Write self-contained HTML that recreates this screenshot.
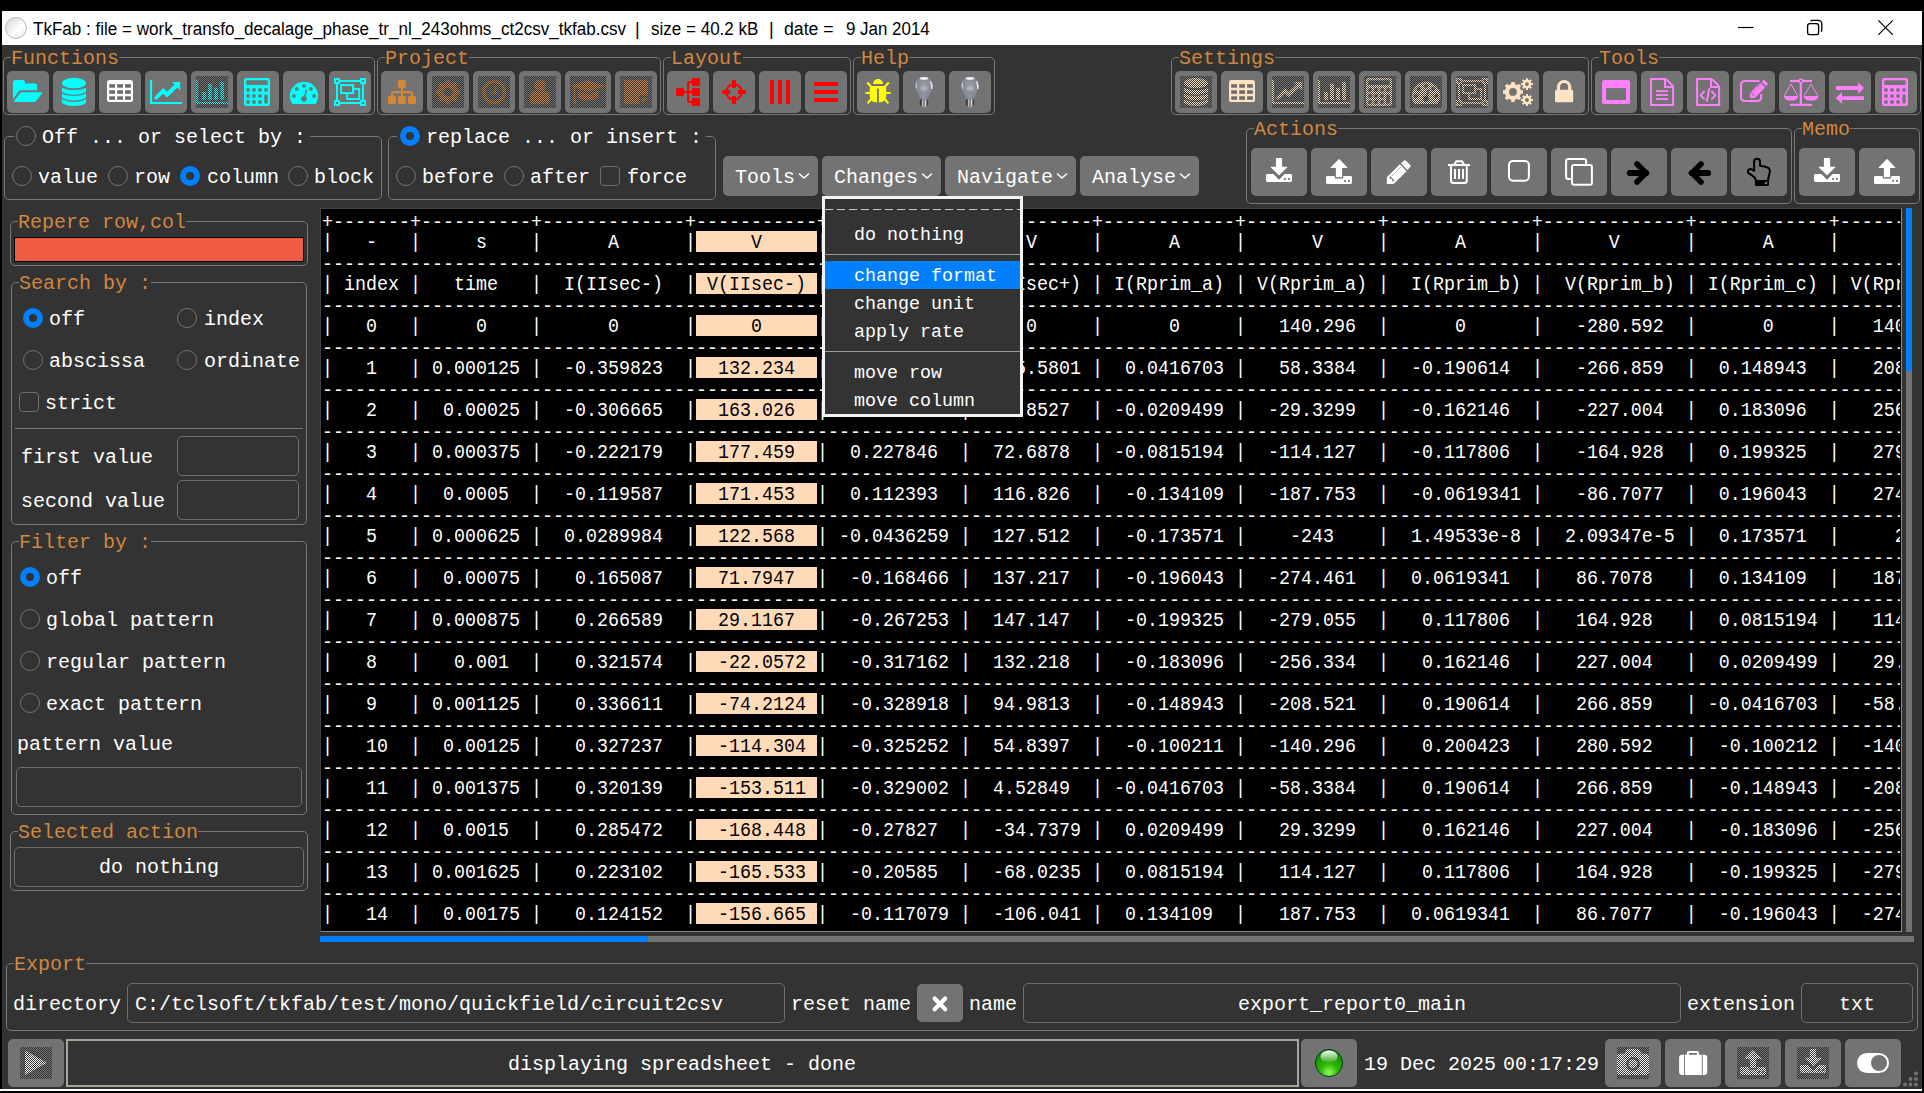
<!DOCTYPE html>
<html><head><meta charset="utf-8"><title>TkFab</title>
<style>
html,body{margin:0;padding:0;background:#000;width:1924px;height:1093px;overflow:hidden}
body{position:relative;font-family:"Liberation Mono",monospace}
.t{position:absolute;white-space:pre;font-family:"Liberation Mono",monospace}
.fr{position:absolute;border:1px solid #787878;border-radius:5px}
.lb{position:absolute;background:#333;color:#d0873f;font-size:20px;line-height:24px;height:22px;white-space:pre;box-sizing:border-box}
.cov{position:absolute;background:#333}
.bt{position:absolute;background:#737373;border-radius:5px}
.ic{position:absolute}
.st{position:absolute;background-image:repeating-conic-gradient(#333 0 25%,transparent 0 50%);background-size:2px 2px}
.ru{position:absolute;width:18px;height:18px;border:1px solid #747474;border-radius:50%}
.rs{position:absolute;width:8px;height:8px;border:6px solid #0080ff;border-radius:50%;background:#333}
.ck{position:absolute;width:18px;height:18px;border:1px solid #6e6e6e;border-radius:4px}
.en{position:absolute;border:1px solid #6e6e6e;border-radius:5px}
.tt{position:absolute;top:12px;height:34px;line-height:34px;font-family:"Liberation Sans",sans-serif;font-size:18px;color:#000;white-space:pre}
.tt span{display:inline-block;transform-origin:0 50%}
.tl{margin:0;position:absolute;left:1px;height:19.266px;font-family:"Liberation Mono",monospace;font-size:18.33px;line-height:19.266px;letter-spacing:0;color:#fff;transform:scaleY(1.09);transform-origin:0 0}
.tl b{font-weight:normal;color:#000}
.m{position:absolute;white-space:pre;font-family:"Liberation Mono",monospace;font-size:18.33px;line-height:28px;letter-spacing:0;color:#fff}
</style></head>
<body>
<div style="position:absolute;left:2px;top:11px;width:1920px;height:34px;background:#fff"></div>
<div style="position:absolute;left:2px;top:45px;width:1920px;height:1044px;background:#333"></div>
<div style="position:absolute;left:0px;top:1089px;width:1922px;height:2px;background:#fff"></div>
<div style="position:absolute;left:5px;top:17px;width:20px;height:20px;border-radius:50%;border:1px solid #b8b8b8;background:linear-gradient(135deg,#dcdcdc 10%,#ffffff 60%,#e8e8e8 100%)"></div>
<div class="tt" style="left:33px"><span style="transform:scaleX(0.9475)">TkFab : file = work_transfo_decalage_phase_tr_nl_243ohms_ct2csv_tkfab.csv</span></div>
<div class="tt" style="left:635px"><span style="transform:scaleX(1)">|</span></div>
<div class="tt" style="left:651px"><span style="transform:scaleX(0.9456)">size = 40.2 kB</span></div>
<div class="tt" style="left:769px"><span style="transform:scaleX(1)">|</span></div>
<div class="tt" style="left:784px"><span style="transform:scaleX(0.983)">date =</span></div>
<div class="tt" style="left:846px"><span style="transform:scaleX(0.9396)">9 Jan 2014</span></div>
<svg style="position:absolute;left:1730px;top:11px" width="190" height="34" viewBox="0 0 190 34" fill="none" stroke="#000" stroke-width="1.3"><path d="M8 16.5H23.5" stroke-width="1.2"/><rect x="77.6" y="12.6" width="11" height="11" rx="2.2"/><path d="M80.6 10.2 A1.6 1.6 0 0 1 82.2 9.4 H88.4 A3.4 3.4 0 0 1 91.8 12.8 V19 A1.6 1.6 0 0 1 91 20.6"/><path d="M148.3 9.3 L162.8 23.8 M162.8 9.3 L148.3 23.8" stroke-width="1.2"/></svg>
<div class="fr" style="left:3px;top:57px;width:370px;height:56px"></div>
<div class="lb" style="left:11px;top:47px;width:108px">Functions</div>
<div class="bt" style="left:7px;top:71px;width:42px;height:42px"><svg class="ic" style="left:5px;top:5px;color:#00ffff" width="32" height="32" viewBox="0 0 32 32" fill="currentColor" stroke="none"><path d="M0.9 6.6 Q0.9 3.9 3.6 3.9 H10.4 Q13.1 3.9 13.1 6.6 V7.6 H22.6 Q25.2 7.6 25.2 10.2 V14.2 H9.6 Q7.8 14.2 6.7 15.6 L0.9 23.6Z"/><path d="M10 16.2 H29.4 Q31 16.2 30 17.5 L24 25.1 Q23.2 26.1 21.8 26.1 H2.8 Q1.2 26.1 2.2 24.8 L8 17.2 Q8.8 16.2 10 16.2Z"/></svg></div>
<div class="bt" style="left:53px;top:71px;width:42px;height:42px"><svg class="ic" style="left:5px;top:5px;color:#00ffff" width="32" height="32" viewBox="0 0 32 32" fill="currentColor" stroke="none"><ellipse cx="16" cy="7.1" rx="12.1" ry="5.25"/><path d="M3.9 11.4 C8.9 14.866666666666667 23.1 14.866666666666667 28.1 11.4 V15.7 C23.1 19.766666666666666 8.9 19.766666666666666 3.9 15.7Z"/><path d="M3.9 17.15 C8.9 20.616666666666667 23.1 20.616666666666667 28.1 17.15 V21.45 C23.1 25.516666666666666 8.9 25.516666666666666 3.9 21.45Z"/><path d="M3.9 22.9 C8.9 26.633333333333333 23.1 26.633333333333333 28.1 22.9 V26.8 C23.1 31.133333333333336 8.9 31.133333333333336 3.9 26.8Z"/></svg></div>
<div class="bt" style="left:99px;top:71px;width:42px;height:42px"><svg class="ic" style="left:5px;top:5px;color:#ffffff" width="32" height="32" viewBox="0 0 32 32" fill="currentColor" stroke="none"><rect x="3" y="3.9" width="26" height="22.2" rx="2.6"/><rect x="5.2" y="8.2" width="5.8" height="3.5" fill="#6c6c6c"/><rect x="13.2" y="8.2" width="5.8" height="3.5" fill="#6c6c6c"/><rect x="21.1" y="8.2" width="5.8" height="3.5" fill="#6c6c6c"/><rect x="5.2" y="14.3" width="5.8" height="3.5" fill="#6c6c6c"/><rect x="13.2" y="14.3" width="5.8" height="3.5" fill="#6c6c6c"/><rect x="21.1" y="14.3" width="5.8" height="3.5" fill="#6c6c6c"/><rect x="5.2" y="20.3" width="5.8" height="3.5" fill="#6c6c6c"/><rect x="13.2" y="20.3" width="5.8" height="3.5" fill="#6c6c6c"/><rect x="21.1" y="20.3" width="5.8" height="3.5" fill="#6c6c6c"/></svg></div>
<div class="bt" style="left:145px;top:71px;width:42px;height:42px"><svg class="ic" style="left:5px;top:5px;color:#00ffff" width="32" height="32" viewBox="0 0 32 32" fill="currentColor" stroke="none"><path d="M0 3.9 H2.1 V26 H32.2 V28.1 H0Z"/><path d="M6.3 24.3 L3.7 21.7 L13.2 12 L17 15.8 L24.5 8.6 L22 6.05 H30.2 V14.2 L27.4 11.4 L17 21.4 L13.2 17.6Z"/></svg></div>
<div class="bt" style="left:191px;top:71px;width:42px;height:42px"><svg class="ic" style="left:5px;top:5px;color:#00ffff" width="32" height="32" viewBox="0 0 32 32" fill="currentColor" stroke="none"><path d="M0 3.9 H2 V26 H32 V28 H0Z"/><rect x="6.1" y="16" width="3.9" height="8"/><rect x="12" y="7.7" width="4" height="16.3"/><rect x="18.1" y="11.8" width="3.9" height="12.2"/><rect x="24.1" y="5.9" width="3.9" height="18.1"/></svg><div class="st" style="left:5px;top:5px;width:32px;height:32px"></div></div>
<div class="bt" style="left:237px;top:71px;width:42px;height:42px"><svg class="ic" style="left:5px;top:5px;color:#00ffff" width="32" height="32" viewBox="0 0 32 32" fill="currentColor" stroke="none"><rect x="2" y="2" width="26" height="28" rx="2.2"/><rect x="4.3" y="4.3" width="21.4" height="4.8" rx="0.6" fill="#737373"/><circle cx="6" cy="13.9" r="1.9" fill="#737373"/><circle cx="12" cy="13.9" r="1.9" fill="#737373"/><circle cx="18" cy="13.9" r="1.9" fill="#737373"/><circle cx="6" cy="20" r="1.9" fill="#737373"/><circle cx="12" cy="20" r="1.9" fill="#737373"/><circle cx="18" cy="20" r="1.9" fill="#737373"/><circle cx="6" cy="26" r="1.9" fill="#737373"/><circle cx="12" cy="26" r="1.9" fill="#737373"/><circle cx="18" cy="26" r="1.9" fill="#737373"/><circle cx="24" cy="13.9" r="1.9" fill="#737373"/><rect x="22.3" y="18.2" width="3.4" height="9.6" rx="1.7" fill="#737373"/></svg></div>
<div class="bt" style="left:283px;top:71px;width:42px;height:42px"><svg class="ic" style="left:5px;top:5px;color:#00ffff" width="32" height="32" viewBox="0 0 32 32" fill="currentColor" stroke="none"><path d="M4.3 28.1 A14.2 14.2 0 1 1 27.7 28.1Z"/><circle cx="5.96" cy="20" r="1.9" fill="#737373"/><circle cx="8.8" cy="12.9" r="1.9" fill="#737373"/><circle cx="16" cy="9.9" r="1.9" fill="#737373"/><circle cx="23" cy="12.9" r="1.9" fill="#737373"/><circle cx="26.1" cy="20" r="1.9" fill="#737373"/><circle cx="16" cy="22.8" r="2.9" fill="#737373"/><path d="M15.4 22.4 L17.7 13.6 L19.2 14 L16.9 22.8Z" fill="#737373"/></svg></div>
<div class="bt" style="left:329px;top:71px;width:42px;height:42px"><svg class="ic" style="left:5px;top:5px;color:#00ffff" width="32" height="32" viewBox="0 0 32 32" fill="currentColor" stroke="none"><path d="M0 2 H6 V4 H26 V2 H32 V8 H30 V24 H32 V30 H26 V28 H6 V30 H0 V24 H2 V8 H0Z M4 8 V24 H6 V26 H26 V24 H28 V8 H26 V6 H6 V8Z" fill-rule="evenodd"/><rect x="2" y="4" width="2" height="2" fill="#737373"/><rect x="28" y="4" width="2" height="2" fill="#737373"/><rect x="2" y="26" width="2" height="2" fill="#737373"/><rect x="28" y="26" width="2" height="2" fill="#737373"/><path d="M12.2 12 H26.2 V23.9 H12.2Z M14.2 14 V22 H24.2 V14Z" fill-rule="evenodd"/><rect x="6.1" y="8.1" width="14" height="10"/><rect x="8.1" y="10.1" width="9.9" height="6" fill="#737373"/></svg></div>
<div class="fr" style="left:377px;top:57px;width:282px;height:56px"></div>
<div class="lb" style="left:385px;top:47px;width:84px">Project</div>
<div class="bt" style="left:381px;top:71px;width:42px;height:42px"><svg class="ic" style="left:5px;top:5px;color:#d38839" width="32" height="32" viewBox="0 0 32 32" fill="currentColor" stroke="none"><rect x="12" y="4" width="8" height="8" rx="1.4"/><rect x="2" y="20" width="8" height="8" rx="1.4"/><rect x="12" y="20" width="8" height="8" rx="1.4"/><rect x="22" y="20" width="8" height="8" rx="1.4"/><path d="M16 11 V21 M6 21 V17.6 Q6 16.1 7.5 16.1 H24.5 Q26 16.1 26 17.6 V21" fill="none" stroke="currentColor" stroke-width="2.1"/></svg></div>
<div class="bt" style="left:427px;top:71px;width:42px;height:42px"><svg class="ic" style="left:5px;top:5px;color:#d38839" width="32" height="32" viewBox="0 0 32 32" fill="currentColor" stroke="none"><path d="M25.35 13.84 L28.00 13.81 L28.00 18.19 L25.35 18.16 L24.14 21.09 L26.04 22.94 L22.94 26.04 L21.09 24.14 L18.16 25.35 L18.19 28.00 L13.81 28.00 L13.84 25.35 L10.91 24.14 L9.06 26.04 L5.96 22.94 L7.86 21.09 L6.65 18.16 L4.00 18.19 L4.00 13.81 L6.65 13.84 L7.86 10.91 L5.96 9.06 L9.06 5.96 L10.91 7.86 L13.84 6.65 L13.81 4.00 L18.19 4.00 L18.16 6.65 L21.09 7.86 L22.94 5.96 L26.04 9.06 L24.14 10.91Z"/><circle cx="16" cy="16" r="9.6"/><circle cx="16" cy="16" r="4.1" fill="#737373"/></svg><div class="st" style="left:5px;top:5px;width:32px;height:32px"></div></div>
<div class="bt" style="left:473px;top:71px;width:42px;height:42px"><svg class="ic" style="left:5px;top:5px;color:#d38839" width="32" height="32" viewBox="0 0 32 32" fill="currentColor" stroke="none"><circle cx="16" cy="16" r="12"/><circle cx="16" cy="16" r="8.9" fill="#737373"/><path d="M16.2 10 H18.2 V17.8 H12.2 V15.8 H16.2Z"/></svg><div class="st" style="left:5px;top:5px;width:32px;height:32px"></div></div>
<div class="bt" style="left:519px;top:71px;width:42px;height:42px"><svg class="ic" style="left:5px;top:5px;color:#d38839" width="32" height="32" viewBox="0 0 32 32" fill="currentColor" stroke="none"><circle cx="16" cy="9.6" r="6"/><path d="M5.9 24.5 V22 Q5.9 14.8 11.6 14.8 Q16 18.4 20.4 14.8 Q26 14.8 26 22 V24.5 Q26 28 22.5 28 H9.4 Q5.9 28 5.9 24.5Z"/></svg><div class="st" style="left:5px;top:5px;width:32px;height:32px"></div></div>
<div class="bt" style="left:565px;top:71px;width:46px;height:42px"><svg class="ic" style="left:5px;top:5px;color:#d38839" width="36" height="32" viewBox="0 0 36 32" fill="currentColor" stroke="none"><path d="M0.2 10 L18 3.9 L36 10 L18 16.6Z"/><path d="M8 14.5 L18 18.4 L28.2 14.5 V20 Q28.2 24 18 24 Q8 24 8 20Z"/><path d="M3.4 11.5 L5.2 12.2 V20 L6.6 28 H3.6 L3.4 20Z"/></svg><div class="st" style="left:5px;top:5px;width:36px;height:32px"></div></div>
<div class="bt" style="left:615px;top:71px;width:42px;height:42px"><svg class="ic" style="left:5px;top:5px;color:#d38839" width="32" height="32" viewBox="0 0 32 32" fill="currentColor" stroke="none"><path d="M4 3.9 H28 V19.5 H21.5 Q19.5 19.5 19.5 21.5 V28 H4Z"/><path d="M21.7 28 V22.5 Q21.7 21.7 22.5 21.7 H28Z"/></svg><div class="st" style="left:5px;top:5px;width:32px;height:32px"></div></div>
<div class="fr" style="left:663px;top:57px;width:186px;height:56px"></div>
<div class="lb" style="left:671px;top:47px;width:72px">Layout</div>
<div class="bt" style="left:667px;top:71px;width:42px;height:42px"><svg class="ic" style="left:5px;top:5px;color:#ff0000" width="32" height="32" viewBox="0 0 32 32" fill="currentColor" stroke="none"><g transform="rotate(-90 16 16)"><rect x="12" y="4" width="8" height="8" rx="1.4"/><rect x="2" y="20" width="8" height="8" rx="1.4"/><rect x="12" y="20" width="8" height="8" rx="1.4"/><rect x="22" y="20" width="8" height="8" rx="1.4"/><path d="M16 11 V21 M6 21 V17.6 Q6 16.1 7.5 16.1 H24.5 Q26 16.1 26 17.6 V21" fill="none" stroke="currentColor" stroke-width="2.1"/></g></svg></div>
<div class="bt" style="left:713px;top:71px;width:42px;height:42px"><svg class="ic" style="left:5px;top:5px;color:#ff0000" width="32" height="32" viewBox="0 0 32 32" fill="currentColor" stroke="none"><circle cx="16" cy="16" r="7.7" fill="none" stroke="currentColor" stroke-width="2.1"/><rect x="14" y="4.1" width="4" height="7.8"/><rect x="14" y="20.1" width="4" height="7.8"/><rect x="4.1" y="14" width="7.9" height="4"/><rect x="20.1" y="14" width="7.9" height="4"/></svg></div>
<div class="bt" style="left:759px;top:71px;width:42px;height:42px"><svg class="ic" style="left:5px;top:5px;color:#ff0000" width="32" height="32" viewBox="0 0 32 32" fill="currentColor" stroke="none"><rect x="6" y="4" width="4" height="24" rx="0.5"/><rect x="14" y="4" width="4" height="24" rx="0.5"/><rect x="22" y="4" width="4" height="24" rx="0.5"/></svg></div>
<div class="bt" style="left:805px;top:71px;width:42px;height:42px"><svg class="ic" style="left:5px;top:5px;color:#ff0000" width="32" height="32" viewBox="0 0 32 32" fill="currentColor" stroke="none"><rect x="4" y="6" width="24" height="4" rx="0.5"/><rect x="4" y="14" width="24" height="4" rx="0.5"/><rect x="4" y="22" width="24" height="4" rx="0.5"/></svg></div>
<div class="fr" style="left:853px;top:57px;width:140px;height:56px"></div>
<div class="lb" style="left:861px;top:47px;width:48px">Help</div>
<div class="bt" style="left:857px;top:71px;width:42px;height:42px"><svg class="ic" style="left:5px;top:5px;color:#ffff00" width="32" height="32" viewBox="0 0 32 32" fill="currentColor" stroke="none"><path d="M11 8.1 A5 5 0 0 1 21 8.1Z"/><path d="M10.2 9.9 H21.8 Q24.2 9.9 24.2 12.5 V19 Q24.2 26.4 16.9 26.4 V12.4 H15 V26.4 Q7.7 26.4 7.7 19 V12.5 Q7.7 9.9 10.2 9.9Z"/><path d="M5.2 6.6 L9.6 11.2 M26.8 6.6 L22.4 11.2 M3.4 17 H8 M24 17 H28.6 M9.6 22.6 L5.6 27.4 M22.4 22.6 L26.4 27.4" stroke="currentColor" stroke-width="2.1" fill="none"/></svg></div>
<div class="bt" style="left:903px;top:71px;width:42px;height:42px"><svg class="ic" style="left:5px;top:5px;color:#9aa" width="32" height="32" viewBox="0 0 32 32" fill="currentColor" stroke="none"><defs><radialGradient id="bg1" cx="0.5" cy="0.45" r="0.6"><stop offset="0" stop-color="#a0a4ab"/><stop offset="0.5" stop-color="#8b8e95"/><stop offset="0.85" stop-color="#858991"/><stop offset="1" stop-color="#7a8292"/></radialGradient><linearGradient id="bg2" x1="0" x2="1"><stop offset="0" stop-color="#2c2c2c"/><stop offset="0.22" stop-color="#555"/><stop offset="0.36" stop-color="#e8e8e8"/><stop offset="0.5" stop-color="#4a4a4a"/><stop offset="0.68" stop-color="#e0e0e0"/><stop offset="0.85" stop-color="#555"/><stop offset="1" stop-color="#2a2a2a"/></linearGradient></defs><path d="M16 0.3 C9.6 0.3 6.6 5 6.6 9.6 C6.6 14.4 10.6 17.4 11.6 23.4 H20.4 C21.4 17.4 25.4 14.4 25.4 9.6 C25.4 5 22.4 0.3 16 0.3Z" fill="url(#bg1)" stroke="#5e6b86" stroke-width="0.7" stroke-opacity="0.85"/><ellipse cx="16" cy="2.5" rx="4.2" ry="1.4" fill="#fff" opacity="0.85"/><path d="M22.6 5.6 Q25 9 23.9 13 Q23.2 9 22.6 5.6Z" fill="#fff" stroke="#fff" stroke-width="0.9" opacity="0.8"/><path d="M8.4 6.8 Q7.2 10 8.6 12.6 Q8.2 9.4 8.4 6.8Z" fill="#fff" stroke="#fff" stroke-width="0.7" opacity="0.55"/><ellipse cx="16.2" cy="12.6" rx="3.6" ry="2.2" fill="#c4c8d0" opacity="0.45"/><path d="M14.4 23.4 V19 Q14.4 17.8 15.4 17.8 H16.8 Q17.8 17.8 17.8 19 V23.4" fill="#9aa0a8" fill-opacity="0.5" stroke="#7f8ea3" stroke-width="0.6"/><path d="M11.9 23.4 H20.1 V29 L18.6 30.2 H13.4 L11.9 29Z" fill="url(#bg2)"/><path d="M13.8 30.2 H18.2 L17.6 31.6 H14.4Z" fill="#9a9a9a"/></svg></div>
<div class="bt" style="left:949px;top:71px;width:42px;height:42px"><svg class="ic" style="left:5px;top:5px;color:#9aa" width="32" height="32" viewBox="0 0 32 32" fill="currentColor" stroke="none"><defs><radialGradient id="bg1" cx="0.5" cy="0.45" r="0.6"><stop offset="0" stop-color="#a0a4ab"/><stop offset="0.5" stop-color="#8b8e95"/><stop offset="0.85" stop-color="#858991"/><stop offset="1" stop-color="#7a8292"/></radialGradient><linearGradient id="bg2" x1="0" x2="1"><stop offset="0" stop-color="#2c2c2c"/><stop offset="0.22" stop-color="#555"/><stop offset="0.36" stop-color="#e8e8e8"/><stop offset="0.5" stop-color="#4a4a4a"/><stop offset="0.68" stop-color="#e0e0e0"/><stop offset="0.85" stop-color="#555"/><stop offset="1" stop-color="#2a2a2a"/></linearGradient></defs><path d="M16 0.3 C9.6 0.3 6.6 5 6.6 9.6 C6.6 14.4 10.6 17.4 11.6 23.4 H20.4 C21.4 17.4 25.4 14.4 25.4 9.6 C25.4 5 22.4 0.3 16 0.3Z" fill="url(#bg1)" stroke="#5e6b86" stroke-width="0.7" stroke-opacity="0.85"/><ellipse cx="16" cy="2.5" rx="4.2" ry="1.4" fill="#fff" opacity="0.85"/><path d="M22.6 5.6 Q25 9 23.9 13 Q23.2 9 22.6 5.6Z" fill="#fff" stroke="#fff" stroke-width="0.9" opacity="0.8"/><path d="M8.4 6.8 Q7.2 10 8.6 12.6 Q8.2 9.4 8.4 6.8Z" fill="#fff" stroke="#fff" stroke-width="0.7" opacity="0.55"/><ellipse cx="16.2" cy="12.6" rx="3.6" ry="2.2" fill="#c4c8d0" opacity="0.45"/><path d="M14.4 23.4 V19 Q14.4 17.8 15.4 17.8 H16.8 Q17.8 17.8 17.8 19 V23.4" fill="#9aa0a8" fill-opacity="0.5" stroke="#7f8ea3" stroke-width="0.6"/><path d="M11.9 23.4 H20.1 V29 L18.6 30.2 H13.4 L11.9 29Z" fill="url(#bg2)"/><path d="M13.8 30.2 H18.2 L17.6 31.6 H14.4Z" fill="#9a9a9a"/></svg></div>
<div class="fr" style="left:1171px;top:57px;width:416px;height:56px"></div>
<div class="lb" style="left:1179px;top:47px;width:96px">Settings</div>
<div class="bt" style="left:1175px;top:71px;width:42px;height:42px"><svg class="ic" style="left:5px;top:5px;color:#ffe4c4" width="32" height="32" viewBox="0 0 32 32" fill="currentColor" stroke="none"><ellipse cx="16" cy="7.1" rx="12.1" ry="5.25"/><path d="M3.9 11.4 C8.9 14.866666666666667 23.1 14.866666666666667 28.1 11.4 V15.7 C23.1 19.766666666666666 8.9 19.766666666666666 3.9 15.7Z"/><path d="M3.9 17.15 C8.9 20.616666666666667 23.1 20.616666666666667 28.1 17.15 V21.45 C23.1 25.516666666666666 8.9 25.516666666666666 3.9 21.45Z"/><path d="M3.9 22.9 C8.9 26.633333333333333 23.1 26.633333333333333 28.1 22.9 V26.8 C23.1 31.133333333333336 8.9 31.133333333333336 3.9 26.8Z"/></svg><div class="st" style="left:5px;top:5px;width:32px;height:32px"></div></div>
<div class="bt" style="left:1221px;top:71px;width:42px;height:42px"><svg class="ic" style="left:5px;top:5px;color:#ffe4c4" width="32" height="32" viewBox="0 0 32 32" fill="currentColor" stroke="none"><rect x="3" y="3.9" width="26" height="22.2" rx="2.6"/><rect x="5.2" y="8.2" width="5.8" height="3.5" fill="#6c6c6c"/><rect x="13.2" y="8.2" width="5.8" height="3.5" fill="#6c6c6c"/><rect x="21.1" y="8.2" width="5.8" height="3.5" fill="#6c6c6c"/><rect x="5.2" y="14.3" width="5.8" height="3.5" fill="#6c6c6c"/><rect x="13.2" y="14.3" width="5.8" height="3.5" fill="#6c6c6c"/><rect x="21.1" y="14.3" width="5.8" height="3.5" fill="#6c6c6c"/><rect x="5.2" y="20.3" width="5.8" height="3.5" fill="#6c6c6c"/><rect x="13.2" y="20.3" width="5.8" height="3.5" fill="#6c6c6c"/><rect x="21.1" y="20.3" width="5.8" height="3.5" fill="#6c6c6c"/></svg></div>
<div class="bt" style="left:1267px;top:71px;width:42px;height:42px"><svg class="ic" style="left:5px;top:5px;color:#ffe4c4" width="32" height="32" viewBox="0 0 32 32" fill="currentColor" stroke="none"><path d="M0 3.9 H2.1 V26 H32.2 V28.1 H0Z"/><path d="M6.3 24.3 L3.7 21.7 L13.2 12 L17 15.8 L24.5 8.6 L22 6.05 H30.2 V14.2 L27.4 11.4 L17 21.4 L13.2 17.6Z"/></svg><div class="st" style="left:5px;top:5px;width:32px;height:32px"></div></div>
<div class="bt" style="left:1313px;top:71px;width:42px;height:42px"><svg class="ic" style="left:5px;top:5px;color:#ffe4c4" width="32" height="32" viewBox="0 0 32 32" fill="currentColor" stroke="none"><path d="M0 3.9 H2 V26 H32 V28 H0Z"/><rect x="6.1" y="16" width="3.9" height="8"/><rect x="12" y="7.7" width="4" height="16.3"/><rect x="18.1" y="11.8" width="3.9" height="12.2"/><rect x="24.1" y="5.9" width="3.9" height="18.1"/></svg><div class="st" style="left:5px;top:5px;width:32px;height:32px"></div></div>
<div class="bt" style="left:1359px;top:71px;width:42px;height:42px"><svg class="ic" style="left:5px;top:5px;color:#ffe4c4" width="32" height="32" viewBox="0 0 32 32" fill="currentColor" stroke="none"><rect x="2" y="2" width="26" height="28" rx="2.2"/><rect x="4.3" y="4.3" width="21.4" height="4.8" rx="0.6" fill="#737373"/><circle cx="6" cy="13.9" r="1.9" fill="#737373"/><circle cx="12" cy="13.9" r="1.9" fill="#737373"/><circle cx="18" cy="13.9" r="1.9" fill="#737373"/><circle cx="6" cy="20" r="1.9" fill="#737373"/><circle cx="12" cy="20" r="1.9" fill="#737373"/><circle cx="18" cy="20" r="1.9" fill="#737373"/><circle cx="6" cy="26" r="1.9" fill="#737373"/><circle cx="12" cy="26" r="1.9" fill="#737373"/><circle cx="18" cy="26" r="1.9" fill="#737373"/><circle cx="24" cy="13.9" r="1.9" fill="#737373"/><rect x="22.3" y="18.2" width="3.4" height="9.6" rx="1.7" fill="#737373"/></svg><div class="st" style="left:5px;top:5px;width:32px;height:32px"></div></div>
<div class="bt" style="left:1405px;top:71px;width:42px;height:42px"><svg class="ic" style="left:5px;top:5px;color:#ffe4c4" width="32" height="32" viewBox="0 0 32 32" fill="currentColor" stroke="none"><path d="M4.3 28.1 A14.2 14.2 0 1 1 27.7 28.1Z"/><circle cx="5.96" cy="20" r="1.9" fill="#737373"/><circle cx="8.8" cy="12.9" r="1.9" fill="#737373"/><circle cx="16" cy="9.9" r="1.9" fill="#737373"/><circle cx="23" cy="12.9" r="1.9" fill="#737373"/><circle cx="26.1" cy="20" r="1.9" fill="#737373"/><circle cx="16" cy="22.8" r="2.9" fill="#737373"/><path d="M15.4 22.4 L17.7 13.6 L19.2 14 L16.9 22.8Z" fill="#737373"/></svg><div class="st" style="left:5px;top:5px;width:32px;height:32px"></div></div>
<div class="bt" style="left:1451px;top:71px;width:42px;height:42px"><svg class="ic" style="left:5px;top:5px;color:#ffe4c4" width="32" height="32" viewBox="0 0 32 32" fill="currentColor" stroke="none"><path d="M0 2 H6 V4 H26 V2 H32 V8 H30 V24 H32 V30 H26 V28 H6 V30 H0 V24 H2 V8 H0Z M4 8 V24 H6 V26 H26 V24 H28 V8 H26 V6 H6 V8Z" fill-rule="evenodd"/><rect x="2" y="4" width="2" height="2" fill="#737373"/><rect x="28" y="4" width="2" height="2" fill="#737373"/><rect x="2" y="26" width="2" height="2" fill="#737373"/><rect x="28" y="26" width="2" height="2" fill="#737373"/><path d="M12.2 12 H26.2 V23.9 H12.2Z M14.2 14 V22 H24.2 V14Z" fill-rule="evenodd"/><rect x="6.1" y="8.1" width="14" height="10"/><rect x="8.1" y="10.1" width="9.9" height="6" fill="#737373"/></svg><div class="st" style="left:5px;top:5px;width:32px;height:32px"></div></div>
<div class="bt" style="left:1497px;top:71px;width:42px;height:42px"><svg class="ic" style="left:5px;top:5px;color:#ffe4c4" width="32" height="32" viewBox="0 0 32 32" fill="currentColor" stroke="none"><path d="M18.66 14.25 L20.90 14.21 L20.90 17.69 L18.66 17.65 L17.61 20.20 L19.21 21.76 L16.76 24.21 L15.20 22.61 L12.65 23.66 L12.69 25.90 L9.21 25.90 L9.25 23.66 L6.70 22.61 L5.14 24.21 L2.69 21.76 L4.29 20.20 L3.24 17.65 L1.00 17.69 L1.00 14.21 L3.24 14.25 L4.29 11.70 L2.69 10.14 L5.14 7.69 L6.70 9.29 L9.25 8.24 L9.21 6.00 L12.69 6.00 L12.65 8.24 L15.20 9.29 L16.76 7.69 L19.21 10.14 L17.61 11.70Z"/><circle cx="10.95" cy="15.95" r="7.9"/><circle cx="10.95" cy="15.95" r="3.9" fill="#737373"/><path d="M29.15 7.12 L30.86 7.02 L30.86 9.08 L29.15 8.98 L28.57 10.36 L29.86 11.50 L28.40 12.96 L27.26 11.67 L25.88 12.25 L25.98 13.96 L23.92 13.96 L24.02 12.25 L22.64 11.67 L21.50 12.96 L20.04 11.50 L21.33 10.36 L20.75 8.98 L19.04 9.08 L19.04 7.02 L20.75 7.12 L21.33 5.74 L20.04 4.60 L21.50 3.14 L22.64 4.43 L24.02 3.85 L23.92 2.14 L25.98 2.14 L25.88 3.85 L27.26 4.43 L28.40 3.14 L29.86 4.60 L28.57 5.74Z"/><circle cx="24.95" cy="8.05" r="4.3"/><circle cx="24.95" cy="8.05" r="1.9" fill="#737373"/><path d="M29.15 23.07 L30.86 22.97 L30.86 25.03 L29.15 24.93 L28.57 26.31 L29.86 27.45 L28.40 28.91 L27.26 27.62 L25.88 28.20 L25.98 29.91 L23.92 29.91 L24.02 28.20 L22.64 27.62 L21.50 28.91 L20.04 27.45 L21.33 26.31 L20.75 24.93 L19.04 25.03 L19.04 22.97 L20.75 23.07 L21.33 21.69 L20.04 20.55 L21.50 19.09 L22.64 20.38 L24.02 19.80 L23.92 18.09 L25.98 18.09 L25.88 19.80 L27.26 20.38 L28.40 19.09 L29.86 20.55 L28.57 21.69Z"/><circle cx="24.95" cy="24" r="4.3"/><circle cx="24.95" cy="24" r="1.9" fill="#737373"/></svg></div>
<div class="bt" style="left:1543px;top:71px;width:42px;height:42px"><svg class="ic" style="left:5px;top:5px;color:#ffe4c4" width="32" height="32" viewBox="0 0 32 32" fill="currentColor" stroke="none"><rect x="7" y="13.8" width="18.2" height="12.4" rx="1.5"/><path d="M10.5 14 V11.1 A5.6 5.6 0 0 1 21.7 11.1 V14" fill="none" stroke="currentColor" stroke-width="3.2"/></svg></div>
<div class="fr" style="left:1591px;top:57px;width:328px;height:56px"></div>
<div class="lb" style="left:1599px;top:47px;width:60px">Tools</div>
<div class="bt" style="left:1595px;top:71px;width:42px;height:42px"><svg class="ic" style="left:5px;top:5px;color:#ff80ff" width="32" height="32" viewBox="0 0 32 32" fill="currentColor" stroke="none"><rect x="2.1" y="4" width="28" height="24.1" rx="2.2"/><rect x="6.1" y="12.1" width="19.9" height="11.8" fill="#737373"/></svg></div>
<div class="bt" style="left:1641px;top:71px;width:42px;height:42px"><svg class="ic" style="left:5px;top:5px;color:#ff80ff" width="32" height="32" viewBox="0 0 32 32" fill="currentColor" stroke="none"><path d="M5.1 3.1 H19 V11 H27.1 V29 H5.1Z M20 3.1 L27.1 10.2" fill="none" stroke="currentColor" stroke-width="2"/><rect x="10.1" y="14.2" width="11.9" height="1.9"/><rect x="10.1" y="18.1" width="11.9" height="1.9"/><rect x="10.1" y="22.1" width="11.9" height="1.9"/></svg></div>
<div class="bt" style="left:1687px;top:71px;width:42px;height:42px"><svg class="ic" style="left:5px;top:5px;color:#ff80ff" width="32" height="32" viewBox="0 0 32 32" fill="currentColor" stroke="none"><path d="M5.1 3.1 H19 V11 H27.1 V29 H5.1Z M20 3.1 L27.1 10.2" fill="none" stroke="currentColor" stroke-width="2"/><path d="M12.6 15 L8.6 19.2 L12.6 23.4 M19.4 15 L23.4 19.2 L19.4 23.4 M17.3 12.3 L14.7 25.6" fill="none" stroke="currentColor" stroke-width="1.9"/></svg></div>
<div class="bt" style="left:1733px;top:71px;width:42px;height:42px"><svg class="ic" style="left:5px;top:5px;color:#ff80ff" width="32" height="32" viewBox="0 0 32 32" fill="currentColor" stroke="none"><path d="M21.5 5 H7 Q3 5 3 9 V21 Q3 25 7 25 H19.2 Q23.2 25 23.2 21 V18" fill="none" stroke="currentColor" stroke-width="2.1"/><g transform="rotate(-45 16 16)"><path d="M8.93 17.27 L12.33 13.87 H27.1 V20.67 H12.33Z"/><rect x="28.6" y="14.2" width="3.2" height="6.1" rx="0.6"/><path d="M13.2 15.4 H26.4" stroke="#737373" stroke-width="0.7" stroke-dasharray="0.9 0.7"/><path d="M13.9 14.6 V18.3 H12.7 V17.1 H13.3 V15.9 H12.7 V14.6Z" fill="#737373"/></g></svg></div>
<div class="bt" style="left:1779px;top:71px;width:46px;height:42px"><svg class="ic" style="left:5px;top:5px;color:#ff80ff" width="36" height="32" viewBox="0 0 36 32" fill="currentColor" stroke="none"><rect x="5.9" y="3.9" width="22.1" height="2.2"/><rect x="15.7" y="5" width="2.2" height="23.5"/><rect x="5.9" y="27.8" width="22.1" height="2.1"/><circle cx="16.85" cy="5" r="2.4"/><circle cx="16.85" cy="5" r="1.1" fill="#737373"/><path d="M0.2 19.9 L7 8.1 L13.8 19.9 M20 19.9 L26.95 8.1 L33.9 19.9" fill="none" stroke="currentColor" stroke-width="1"/><path d="M0 19.9 H14 Q14 24.6 7 24.6 Q0 24.6 0 19.9Z M19.9 19.9 H34.1 Q34.1 24.6 27 24.6 Q19.9 24.6 19.9 19.9Z"/></svg></div>
<div class="bt" style="left:1829px;top:71px;width:42px;height:42px"><svg class="ic" style="left:5px;top:5px;color:#ff80ff" width="32" height="32" viewBox="0 0 32 32" fill="currentColor" stroke="none"><path d="M2 10.1 H24.2 V6.4 L30.2 12 L24.2 17.7 V14 H2Z M30 20.2 H8 V16.3 L1.8 22 L8 27.7 V24 H30Z"/></svg></div>
<div class="bt" style="left:1875px;top:71px;width:42px;height:42px"><svg class="ic" style="left:5px;top:5px;color:#ff80ff" width="32" height="32" viewBox="0 0 32 32" fill="currentColor" stroke="none"><rect x="2" y="2" width="26" height="28" rx="2.2"/><rect x="4.3" y="4.3" width="21.4" height="4.8" rx="0.6" fill="#737373"/><circle cx="6" cy="13.9" r="1.9" fill="#737373"/><circle cx="12" cy="13.9" r="1.9" fill="#737373"/><circle cx="18" cy="13.9" r="1.9" fill="#737373"/><circle cx="6" cy="20" r="1.9" fill="#737373"/><circle cx="12" cy="20" r="1.9" fill="#737373"/><circle cx="18" cy="20" r="1.9" fill="#737373"/><circle cx="6" cy="26" r="1.9" fill="#737373"/><circle cx="12" cy="26" r="1.9" fill="#737373"/><circle cx="18" cy="26" r="1.9" fill="#737373"/><circle cx="24" cy="13.9" r="1.9" fill="#737373"/><rect x="22.3" y="18.2" width="3.4" height="9.6" rx="1.7" fill="#737373"/></svg></div>
<div class="fr" style="left:4px;top:136px;width:376px;height:62px"></div>
<div class="cov" style="left:14px;top:124px;width:296px;height:24px"></div>
<div class="ru" style="left:16px;top:126px"></div>
<div class="t" style="left:42px;top:126px;font-size:20px;line-height:24px;color:#fff;">Off ... or select by :</div>
<div class="ru" style="left:12px;top:166px"></div>
<div class="t" style="left:38px;top:166px;font-size:20px;line-height:24px;color:#fff;">value</div>
<div class="ru" style="left:108px;top:166px"></div>
<div class="t" style="left:134px;top:166px;font-size:20px;line-height:24px;color:#fff;">row</div>
<div class="rs" style="left:180px;top:166px"></div>
<div class="t" style="left:207px;top:166px;font-size:20px;line-height:24px;color:#fff;">column</div>
<div class="ru" style="left:288px;top:166px"></div>
<div class="t" style="left:314px;top:166px;font-size:20px;line-height:24px;color:#fff;">block</div>
<div class="fr" style="left:388px;top:136px;width:326px;height:62px"></div>
<div class="cov" style="left:397px;top:124px;width:309px;height:24px"></div>
<div class="rs" style="left:400px;top:126px"></div>
<div class="t" style="left:426px;top:126px;font-size:20px;line-height:24px;color:#fff;">replace ... or insert :</div>
<div class="ru" style="left:396px;top:166px"></div>
<div class="t" style="left:422px;top:166px;font-size:20px;line-height:24px;color:#fff;">before</div>
<div class="ru" style="left:504px;top:166px"></div>
<div class="t" style="left:530px;top:166px;font-size:20px;line-height:24px;color:#fff;">after</div>
<div class="ck" style="left:600px;top:166px"></div>
<div class="t" style="left:627px;top:166px;font-size:20px;line-height:24px;color:#fff;">force</div>
<div class="bt" style="left:723px;top:156px;width:95px;height:40px"></div>
<div class="t" style="left:735px;top:166px;font-size:20px;line-height:24px;color:#fff;">Tools</div>
<svg style="position:absolute;left:797px;top:170px" width="14" height="12" viewBox="0 0 14 12" fill="none" stroke="#fff" stroke-width="1.6" stroke-linecap="round" stroke-linejoin="round"><path d="M2.5 4 L7 8 L11.5 4"/></svg>
<div class="bt" style="left:822px;top:156px;width:119px;height:40px"></div>
<div class="t" style="left:834px;top:166px;font-size:20px;line-height:24px;color:#fff;">Changes</div>
<svg style="position:absolute;left:920px;top:170px" width="14" height="12" viewBox="0 0 14 12" fill="none" stroke="#fff" stroke-width="1.6" stroke-linecap="round" stroke-linejoin="round"><path d="M2.5 4 L7 8 L11.5 4"/></svg>
<div class="bt" style="left:945px;top:156px;width:131px;height:40px"></div>
<div class="t" style="left:957px;top:166px;font-size:20px;line-height:24px;color:#fff;">Navigate</div>
<svg style="position:absolute;left:1055px;top:170px" width="14" height="12" viewBox="0 0 14 12" fill="none" stroke="#fff" stroke-width="1.6" stroke-linecap="round" stroke-linejoin="round"><path d="M2.5 4 L7 8 L11.5 4"/></svg>
<div class="bt" style="left:1080px;top:156px;width:119px;height:40px"></div>
<div class="t" style="left:1092px;top:166px;font-size:20px;line-height:24px;color:#fff;">Analyse</div>
<svg style="position:absolute;left:1178px;top:170px" width="14" height="12" viewBox="0 0 14 12" fill="none" stroke="#fff" stroke-width="1.6" stroke-linecap="round" stroke-linejoin="round"><path d="M2.5 4 L7 8 L11.5 4"/></svg>
<div class="fr" style="left:1246px;top:128px;width:544px;height:74px"></div>
<div class="lb" style="left:1254px;top:118px;width:84px">Actions</div>
<div class="bt" style="left:1251px;top:148px;width:56px;height:48px"><svg class="ic" style="left:12px;top:8px;color:#ffffff" width="32" height="32" viewBox="0 0 32 32" fill="currentColor" stroke="none"><path d="M4.4 18.1 H10.4 L16 23.7 L21.6 18.1 H27.6 Q29 18.1 29 19.5 V24.6 Q29 26 27.6 26 H4.4 Q3 26 3 24.6 V19.5 Q3 18.1 4.4 18.1Z"/><path d="M12.9 2 H19.1 V10.8 H23.9 Q24.6 10.8 24.1 11.4 L16.4 19.1 Q16 19.5 15.6 19.1 L7.9 11.4 Q7.4 10.8 8.1 10.8 H12.9Z" stroke="#737373" stroke-width="2" style="paint-order:stroke"/><path d="M7 10.2 L16 19.8 L25 10.2" fill="none" stroke="#737373" stroke-width="0"/><rect x="21" y="22.1" width="2" height="1.7" fill="#737373"/><rect x="25" y="22.1" width="2" height="1.7" fill="#737373"/></svg></div>
<div class="bt" style="left:1311px;top:148px;width:56px;height:48px"><svg class="ic" style="left:12px;top:8px;color:#ffffff" width="32" height="32" viewBox="0 0 32 32" fill="currentColor" stroke="none"><path d="M4.4 19.9 H11.8 V21.4 Q11.8 22.4 12.8 22.4 H19.2 Q20.2 22.4 20.2 21.4 V19.9 H27.6 Q29 19.9 29 21.3 V26.5 Q29 27.9 27.6 27.9 H4.4 Q3 27.9 3 26.5 V21.3 Q3 19.9 4.4 19.9Z"/><path d="M15.6 3.2 Q16 2.8 16.4 3.2 L24.2 11.3 Q24.7 12 24 12 H19.1 V20.4 Q19.1 21.2 18.3 21.2 H13.7 Q12.9 21.2 12.9 20.4 V12 H8 Q7.3 12 7.8 11.3Z" stroke="#737373" stroke-width="2" style="paint-order:stroke"/><rect x="21" y="24.1" width="2" height="1.7" fill="#737373"/><rect x="25" y="24.1" width="2" height="1.7" fill="#737373"/></svg></div>
<div class="bt" style="left:1371px;top:148px;width:56px;height:48px"><svg class="ic" style="left:12px;top:8px;color:#ffffff" width="32" height="32" viewBox="0 0 32 32" fill="currentColor" stroke="none"><g transform="rotate(-45 16 16)"><path d="M-1.08 15.93 L3.71 11.14 H21.95 V20.72 H3.71Z"/><path d="M23.3 11.4 H27.4 Q28.9 11.4 28.9 12.9 V19 Q28.9 20.5 27.4 20.5 H23.3Z"/><path d="M8.6 13.8 H20.7" stroke="#737373" stroke-width="0.8" stroke-dasharray="1 0.6"/><path d="M6.9 12.9 V18.6 H5 V16.9 H5.9 V15 H5 V12.9Z" fill="#737373"/></g></svg></div>
<div class="bt" style="left:1431px;top:148px;width:56px;height:48px"><svg class="ic" style="left:12px;top:8px;color:#ffffff" width="32" height="32" viewBox="0 0 32 32" fill="currentColor" stroke="none"><path d="M5 9 H27 M8 10 V24.4 Q8 26.9 10.5 26.9 H21.3 Q23.8 26.9 23.8 24.4 V10 M11.3 8.4 L13.4 5.2 H18.9 L21 8.4" fill="none" stroke="currentColor" stroke-width="2"/><rect x="11" y="12.9" width="2" height="10"/><rect x="15" y="12.9" width="2" height="10"/><rect x="19" y="12.9" width="2" height="10"/></svg></div>
<div class="bt" style="left:1491px;top:148px;width:56px;height:48px"><svg class="ic" style="left:12px;top:8px;color:#ffffff" width="32" height="32" viewBox="0 0 32 32" fill="currentColor" stroke="none"><rect x="6" y="5" width="19.9" height="19.8" rx="4" fill="none" stroke="currentColor" stroke-width="2"/></svg></div>
<div class="bt" style="left:1551px;top:148px;width:56px;height:48px"><svg class="ic" style="left:12px;top:8px;color:#ffffff" width="32" height="32" viewBox="0 0 32 32" fill="currentColor" stroke="none"><path d="M23.1 8 V5 Q23.1 3 21.1 3 H5.1 Q3.1 3 3.1 5 V21 Q3.1 22.9 5.1 22.9 H8" fill="none" stroke="currentColor" stroke-width="2"/><rect x="9" y="9" width="19.9" height="19.8" rx="2" fill="none" stroke="currentColor" stroke-width="2"/></svg></div>
<div class="bt" style="left:1611px;top:148px;width:56px;height:48px"><svg class="ic" style="left:12px;top:8px;color:#000" width="32" height="32" viewBox="0 0 32 32" fill="currentColor" stroke="none"><path d="M7 17 H23" fill="none" stroke="currentColor" stroke-width="6.2" stroke-linecap="round"/><path d="M14 8 L23 17 L14 26" fill="none" stroke="currentColor" stroke-width="5.6" stroke-linecap="round" stroke-linejoin="miter"/></svg></div>
<div class="bt" style="left:1671px;top:148px;width:56px;height:48px"><svg class="ic" style="left:12px;top:8px;color:#000" width="32" height="32" viewBox="0 0 32 32" fill="currentColor" stroke="none"><g transform="translate(32 0) scale(-1 1)"><path d="M7 17 H23" fill="none" stroke="currentColor" stroke-width="6.2" stroke-linecap="round"/><path d="M14 8 L23 17 L14 26" fill="none" stroke="currentColor" stroke-width="5.6" stroke-linecap="round" stroke-linejoin="miter"/></g></svg></div>
<div class="bt" style="left:1731px;top:148px;width:56px;height:48px"><svg class="ic" style="left:12px;top:8px;color:#000" width="32" height="32" viewBox="0 0 32 32" fill="currentColor" stroke="none"><path d="M13.2 24.6 C12.7 22.2 11.6 21 9 19.4 L5.9 17.4 C4.5 16.4 4.6 14.5 5.8 13.6 C7 12.7 8.4 13 9.3 13.6 L11.1 14.9 V5.7 A2.95 2.95 0 0 1 17 5.7 V9.7 L21 10.4 C24 10.9 26.9 11.6 26.9 14.6 C26.9 17.2 26 20.2 24.7 24.6" fill="none" stroke="currentColor" stroke-width="2.05" stroke-linejoin="round"/><path d="M11.9 24.1 H26 V28.4 Q26 30 24.4 30 H13.5 Q11.9 30 11.9 28.4Z"/><rect x="21.8" y="25.8" width="2.4" height="2.4" fill="#737373"/></svg></div>
<div class="fr" style="left:1794px;top:128px;width:124px;height:74px"></div>
<div class="lb" style="left:1802px;top:118px;width:48px">Memo</div>
<div class="bt" style="left:1799px;top:148px;width:56px;height:48px"><svg class="ic" style="left:12px;top:8px;color:#ffffff" width="32" height="32" viewBox="0 0 32 32" fill="currentColor" stroke="none"><path d="M4.4 18.1 H10.4 L16 23.7 L21.6 18.1 H27.6 Q29 18.1 29 19.5 V24.6 Q29 26 27.6 26 H4.4 Q3 26 3 24.6 V19.5 Q3 18.1 4.4 18.1Z"/><path d="M12.9 2 H19.1 V10.8 H23.9 Q24.6 10.8 24.1 11.4 L16.4 19.1 Q16 19.5 15.6 19.1 L7.9 11.4 Q7.4 10.8 8.1 10.8 H12.9Z" stroke="#737373" stroke-width="2" style="paint-order:stroke"/><path d="M7 10.2 L16 19.8 L25 10.2" fill="none" stroke="#737373" stroke-width="0"/><rect x="21" y="22.1" width="2" height="1.7" fill="#737373"/><rect x="25" y="22.1" width="2" height="1.7" fill="#737373"/></svg></div>
<div class="bt" style="left:1859px;top:148px;width:56px;height:48px"><svg class="ic" style="left:12px;top:8px;color:#ffffff" width="32" height="32" viewBox="0 0 32 32" fill="currentColor" stroke="none"><path d="M4.4 19.9 H11.8 V21.4 Q11.8 22.4 12.8 22.4 H19.2 Q20.2 22.4 20.2 21.4 V19.9 H27.6 Q29 19.9 29 21.3 V26.5 Q29 27.9 27.6 27.9 H4.4 Q3 27.9 3 26.5 V21.3 Q3 19.9 4.4 19.9Z"/><path d="M15.6 3.2 Q16 2.8 16.4 3.2 L24.2 11.3 Q24.7 12 24 12 H19.1 V20.4 Q19.1 21.2 18.3 21.2 H13.7 Q12.9 21.2 12.9 20.4 V12 H8 Q7.3 12 7.8 11.3Z" stroke="#737373" stroke-width="2" style="paint-order:stroke"/><rect x="21" y="24.1" width="2" height="1.7" fill="#737373"/><rect x="25" y="24.1" width="2" height="1.7" fill="#737373"/></svg></div>
<div class="fr" style="left:10px;top:221px;width:296px;height:43px"></div>
<div class="lb" style="left:18px;top:211px;width:168px">Repere row,col</div>
<div style="position:absolute;left:14px;top:237px;width:288px;height:23px;background:#ee5c42;border:1px solid #000"></div>
<div class="fr" style="left:11px;top:282px;width:294px;height:241px"></div>
<div class="lb" style="left:19px;top:272px;width:132px">Search by :</div>
<div class="rs" style="left:23px;top:308px"></div>
<div class="t" style="left:49px;top:308px;font-size:20px;line-height:24px;color:#fff;">off</div>
<div class="ru" style="left:177px;top:308px"></div>
<div class="t" style="left:204px;top:308px;font-size:20px;line-height:24px;color:#fff;">index</div>
<div class="ru" style="left:23px;top:350px"></div>
<div class="t" style="left:49px;top:350px;font-size:20px;line-height:24px;color:#fff;">abscissa</div>
<div class="ru" style="left:177px;top:350px"></div>
<div class="t" style="left:204px;top:350px;font-size:20px;line-height:24px;color:#fff;">ordinate</div>
<div class="ck" style="left:19px;top:392px"></div>
<div class="t" style="left:45px;top:392px;font-size:20px;line-height:24px;color:#fff;">strict</div>
<div style="position:absolute;left:15px;top:428px;width:288px;height:1px;background:#7a7a7a"></div>
<div class="t" style="left:21px;top:446px;font-size:20px;line-height:24px;color:#fff;">first value</div>
<div class="en" style="left:177px;top:436px;width:120px;height:38px"></div>
<div class="t" style="left:21px;top:490px;font-size:20px;line-height:24px;color:#fff;">second value</div>
<div class="en" style="left:177px;top:480px;width:120px;height:38px"></div>
<div class="fr" style="left:11px;top:541px;width:294px;height:272px"></div>
<div class="lb" style="left:19px;top:531px;width:132px">Filter by :</div>
<div class="rs" style="left:20px;top:567px"></div>
<div class="t" style="left:46px;top:567px;font-size:20px;line-height:24px;color:#fff;">off</div>
<div class="ru" style="left:20px;top:609px"></div>
<div class="t" style="left:46px;top:609px;font-size:20px;line-height:24px;color:#fff;">global pattern</div>
<div class="ru" style="left:20px;top:651px"></div>
<div class="t" style="left:46px;top:651px;font-size:20px;line-height:24px;color:#fff;">regular pattern</div>
<div class="ru" style="left:20px;top:693px"></div>
<div class="t" style="left:46px;top:693px;font-size:20px;line-height:24px;color:#fff;">exact pattern</div>
<div class="t" style="left:17px;top:733px;font-size:20px;line-height:24px;color:#fff;">pattern value</div>
<div class="en" style="left:16px;top:767px;width:284px;height:38px"></div>
<div class="fr" style="left:10px;top:831px;width:296px;height:58px"></div>
<div class="lb" style="left:18px;top:821px;width:180px">Selected action</div>
<div class="en" style="left:14px;top:847px;width:288px;height:38px"></div>
<div class="t" style="left:99px;top:856px;font-size:20px;line-height:24px;color:#fff;">do nothing</div>
<div style="position:absolute;left:320px;top:208px;width:1580px;height:722px;background:#000;border:1px solid;border-color:#424242 #8a8a8a #8a8a8a #424242"></div>
<div style="position:absolute;left:696px;top:231px;width:121px;height:21px;background:#ffdab9"></div>
<div style="position:absolute;left:696px;top:273px;width:121px;height:21px;background:#ffdab9"></div>
<div style="position:absolute;left:696px;top:315px;width:121px;height:21px;background:#ffdab9"></div>
<div style="position:absolute;left:696px;top:357px;width:121px;height:21px;background:#ffdab9"></div>
<div style="position:absolute;left:696px;top:399px;width:121px;height:21px;background:#ffdab9"></div>
<div style="position:absolute;left:696px;top:441px;width:121px;height:21px;background:#ffdab9"></div>
<div style="position:absolute;left:696px;top:483px;width:121px;height:21px;background:#ffdab9"></div>
<div style="position:absolute;left:696px;top:525px;width:121px;height:21px;background:#ffdab9"></div>
<div style="position:absolute;left:696px;top:567px;width:121px;height:21px;background:#ffdab9"></div>
<div style="position:absolute;left:696px;top:609px;width:121px;height:21px;background:#ffdab9"></div>
<div style="position:absolute;left:696px;top:651px;width:121px;height:21px;background:#ffdab9"></div>
<div style="position:absolute;left:696px;top:693px;width:121px;height:21px;background:#ffdab9"></div>
<div style="position:absolute;left:696px;top:735px;width:121px;height:21px;background:#ffdab9"></div>
<div style="position:absolute;left:696px;top:777px;width:121px;height:21px;background:#ffdab9"></div>
<div style="position:absolute;left:696px;top:819px;width:121px;height:21px;background:#ffdab9"></div>
<div style="position:absolute;left:696px;top:861px;width:121px;height:21px;background:#ffdab9"></div>
<div style="position:absolute;left:696px;top:903px;width:121px;height:21px;background:#ffdab9"></div>
<div id="tbw" style="position:absolute;left:321px;top:209px;width:1579px;height:722px;overflow:hidden"><pre class="tl" style="top:3.6px">+-------+----------+-------------+-----------+------------+-----------+------------+------------+-------------+-------------+------------+------------+</pre><pre class="tl" style="top:24px">|   -   |     s    |      A      |<b>     V     </b>|      A     |     V     |      A     |      V     |      A      |      V      |      A     |      V     |</pre><pre class="tl" style="top:45.6px">-------------------------------------------------------------------------------------------------------------------------------------------------------</pre><pre class="tl" style="top:66px">| index |   time   |  I(IIsec-)  |<b> V(IIsec-) </b>|  I(IIsec+) | V(IIsec+) | I(Rprim_a) | V(Rprim_a) |  I(Rprim_b) |  V(Rprim_b) | I(Rprim_c) | V(Rprim_c) |</pre><pre class="tl" style="top:87.6px">-------------------------------------------------------------------------------------------------------------------------------------------------------</pre><pre class="tl" style="top:108px">|   0   |     0    |      0      |<b>     0     </b>|      0     |     0     |      0     |   140.296  |      0      |   -280.592  |      0     |   140.296  |</pre><pre class="tl" style="top:129.6px">-------------------------------------------------------------------------------------------------------------------------------------------------------</pre><pre class="tl" style="top:150px">|   1   | 0.000125 |  -0.359823  |<b>  132.234  </b>|  0.333207  |  -25.5801 |  0.0416703 |   58.3384  |  -0.190614  |   -266.859  |  0.148943  |   208.521  |</pre><pre class="tl" style="top:171.6px">-------------------------------------------------------------------------------------------------------------------------------------------------------</pre><pre class="tl" style="top:192px">|   2   |  0.00025 |  -0.306665  |<b>  163.026  </b>|  0.305812  |  49.8527  | -0.0209499 |  -29.3299  |  -0.162146  |   -227.004  |  0.183096  |   256.334  |</pre><pre class="tl" style="top:213.6px">-------------------------------------------------------------------------------------------------------------------------------------------------------</pre><pre class="tl" style="top:234px">|   3   | 0.000375 |  -0.222179  |<b>  177.459  </b>|  0.227846  |  72.6878  | -0.0815194 |  -114.127  |  -0.117806  |   -164.928  |  0.199325  |   279.055  |</pre><pre class="tl" style="top:255.6px">-------------------------------------------------------------------------------------------------------------------------------------------------------</pre><pre class="tl" style="top:276px">|   4   |  0.0005  |  -0.119587  |<b>  171.453  </b>|  0.112393  |  116.826  |  -0.134109 |  -187.753  |  -0.0619341 |   -86.7077  |  0.196043  |   274.461  |</pre><pre class="tl" style="top:297.6px">-------------------------------------------------------------------------------------------------------------------------------------------------------</pre><pre class="tl" style="top:318px">|   5   | 0.000625 |  0.0289984  |<b>  122.568  </b>| -0.0436259 |  127.512  |  -0.173571 |    -243    |  1.49533e-8 |  2.09347e-5 |  0.173571  |     243    |</pre><pre class="tl" style="top:339.6px">-------------------------------------------------------------------------------------------------------------------------------------------------------</pre><pre class="tl" style="top:360px">|   6   |  0.00075 |   0.165087  |<b>  71.7947  </b>|  -0.168466 |  137.217  |  -0.196043 |  -274.461  |  0.0619341  |   86.7078   |  0.134109  |   187.753  |</pre><pre class="tl" style="top:381.6px">-------------------------------------------------------------------------------------------------------------------------------------------------------</pre><pre class="tl" style="top:402px">|   7   | 0.000875 |   0.266589  |<b>  29.1167  </b>|  -0.267253 |  147.147  |  -0.199325 |  -279.055  |   0.117806  |   164.928   |  0.0815194 |   114.127  |</pre><pre class="tl" style="top:423.6px">-------------------------------------------------------------------------------------------------------------------------------------------------------</pre><pre class="tl" style="top:444px">|   8   |   0.001  |   0.321574  |<b>  -22.0572 </b>|  -0.317162 |  132.218  |  -0.183096 |  -256.334  |   0.162146  |   227.004   |  0.0209499 |   29.3299  |</pre><pre class="tl" style="top:465.6px">-------------------------------------------------------------------------------------------------------------------------------------------------------</pre><pre class="tl" style="top:486px">|   9   | 0.001125 |   0.336611  |<b>  -74.2124 </b>|  -0.328918 |  94.9813  |  -0.148943 |  -208.521  |   0.190614  |   266.859   | -0.0416703 |  -58.3384  |</pre><pre class="tl" style="top:507.6px">-------------------------------------------------------------------------------------------------------------------------------------------------------</pre><pre class="tl" style="top:528px">|   10  |  0.00125 |   0.327237  |<b>  -114.304 </b>|  -0.325252 |  54.8397  |  -0.100211 |  -140.296  |   0.200423  |   280.592   |  -0.100212 |  -140.296  |</pre><pre class="tl" style="top:549.6px">-------------------------------------------------------------------------------------------------------------------------------------------------------</pre><pre class="tl" style="top:570px">|   11  | 0.001375 |   0.320139  |<b>  -153.511 </b>|  -0.329002 |  4.52849  | -0.0416703 |  -58.3384  |   0.190614  |   266.859   |  -0.148943 |  -208.521  |</pre><pre class="tl" style="top:591.6px">-------------------------------------------------------------------------------------------------------------------------------------------------------</pre><pre class="tl" style="top:612px">|   12  |  0.0015  |   0.285472  |<b>  -168.448 </b>|  -0.27827  |  -34.7379 |  0.0209499 |   29.3299  |   0.162146  |   227.004   |  -0.183096 |  -256.334  |</pre><pre class="tl" style="top:633.6px">-------------------------------------------------------------------------------------------------------------------------------------------------------</pre><pre class="tl" style="top:654px">|   13  | 0.001625 |   0.223102  |<b>  -165.533 </b>|  -0.20585  |  -68.0235 |  0.0815194 |   114.127  |   0.117806  |   164.928   |  -0.199325 |  -279.055  |</pre><pre class="tl" style="top:675.6px">-------------------------------------------------------------------------------------------------------------------------------------------------------</pre><pre class="tl" style="top:696px">|   14  |  0.00175 |   0.124152  |<b>  -156.665 </b>|  -0.117079 |  -106.041 |  0.134109  |   187.753  |  0.0619341  |   86.7077   |  -0.196043 |  -274.461  |</pre></div>
<div style="position:absolute;left:1906px;top:208px;width:6px;height:724px;background:#737373"></div>
<div style="position:absolute;left:1906px;top:208px;width:6px;height:163px;background:#0080ff"></div>
<div style="position:absolute;left:320px;top:936px;width:1594px;height:6px;background:#737373"></div>
<div style="position:absolute;left:320px;top:936px;width:328px;height:6px;background:#0080ff"></div>
<div class="fr" style="left:6px;top:963px;width:1910px;height:66px"></div>
<div class="lb" style="left:14px;top:953px;width:72px">Export</div>
<div class="t" style="left:13px;top:993px;font-size:20px;line-height:24px;color:#fff;">directory</div>
<div class="en" style="left:127px;top:983px;width:656px;height:38px"></div>
<div class="t" style="left:135px;top:993px;font-size:20px;line-height:24px;color:#fff;">C:/tclsoft/tkfab/test/mono/quickfield/circuit2csv</div>
<div class="t" style="left:791px;top:993px;font-size:20px;line-height:24px;color:#fff;">reset name</div>
<div class="bt" style="left:917px;top:984px;width:46px;height:38px"><svg class="ic" style="left:7px;top:3px;color:#ffffff" width="32" height="32" viewBox="0 0 32 32" fill="currentColor" stroke="none"><path d="M10.6 11.6 L21.2 22.2 M21.2 11.6 L10.6 22.2" fill="none" stroke="currentColor" stroke-width="4.2" stroke-linecap="round"/></svg></div>
<div class="t" style="left:969px;top:993px;font-size:20px;line-height:24px;color:#fff;">name</div>
<div class="en" style="left:1023px;top:983px;width:656px;height:38px"></div>
<div class="t" style="left:1238px;top:993px;font-size:20px;line-height:24px;color:#fff;">export_report0_main</div>
<div class="t" style="left:1687px;top:993px;font-size:20px;line-height:24px;color:#fff;">extension</div>
<div class="en" style="left:1801px;top:983px;width:110px;height:38px"></div>
<div class="t" style="left:1839px;top:993px;font-size:20px;line-height:24px;color:#fff;">txt</div>
<div class="bt" style="left:8px;top:1039px;width:56px;height:48px"><svg class="ic" style="left:12px;top:8px;color:#ffffff" width="32" height="32" viewBox="0 0 32 32" fill="currentColor" stroke="none"><path d="M5 4.5 Q5 3.3 6 3.9 L26 15.2 Q26.8 15.7 26 16.2 L6 27.5 Q5 28.1 5 26.9Z"/></svg><div class="st" style="left:12px;top:8px;width:32px;height:32px"></div></div>
<div style="position:absolute;left:66px;top:1039px;width:1229px;height:44px;border:2px solid;border-color:#a9a598;"></div>
<div class="t" style="left:508px;top:1053px;font-size:20px;line-height:24px;color:#fff;">displaying spreadsheet - done</div>
<div class="bt" style="left:1301px;top:1039px;width:56px;height:48px"><svg class="ic" style="left:12px;top:8px;color:#fff" width="32" height="32" viewBox="0 0 32 32" fill="currentColor" stroke="none"><defs><radialGradient id="lg1" cx="0.5" cy="0.85" r="0.75"><stop offset="0" stop-color="#8cff5a"/><stop offset="0.45" stop-color="#2db400"/><stop offset="1" stop-color="#0f8a00"/></radialGradient><linearGradient id="lg2" x1="0" y1="0" x2="0" y2="1"><stop offset="0" stop-color="#fff" stop-opacity="1"/><stop offset="0.5" stop-color="#fff" stop-opacity="0.55"/><stop offset="1" stop-color="#fff" stop-opacity="0.05"/></linearGradient></defs><circle cx="16" cy="16" r="13.6" fill="url(#lg1)" stroke="#04382c" stroke-width="1"/><ellipse cx="16" cy="9.6" rx="8.6" ry="6.2" fill="url(#lg2)"/></svg></div>
<div class="t" style="left:1364px;top:1053px;font-size:20px;line-height:24px;color:#fff;">19 Dec 2025</div>
<div class="t" style="left:1503px;top:1053px;font-size:20px;line-height:24px;color:#fff;">00:17:29</div>
<div class="bt" style="left:1605px;top:1039px;width:56px;height:48px"><svg class="ic" style="left:12px;top:8px;color:#ffffff" width="32" height="32" viewBox="0 0 32 32" fill="currentColor" stroke="none"><path d="M3 6.8 H7.6 L9 3.4 Q9.6 1.9 11.2 1.9 H20.8 Q22.4 1.9 23 3.4 L24.4 6.8 H29 Q32 6.8 32 9.8 V25 Q32 28 29 28 H3 Q0 28 0 25 V9.8 Q0 6.8 3 6.8Z"/><circle cx="16" cy="16.8" r="6.9" fill="#737373"/><circle cx="16" cy="16.8" r="4.5"/></svg><div class="st" style="left:12px;top:8px;width:32px;height:32px"></div></div>
<div class="bt" style="left:1665px;top:1039px;width:56px;height:48px"><svg class="ic" style="left:12px;top:8px;color:#ffffff" width="32" height="32" viewBox="0 0 32 32" fill="currentColor" stroke="none"><rect x="2.1" y="7.8" width="28.1" height="20.2" rx="3"/><path d="M10.9 8 V6 Q10.9 5 11.9 5 H20 Q21 5 21 6 V8" fill="none" stroke="currentColor" stroke-width="2.1"/><rect x="7" y="7.8" width="0.9" height="20.2" fill="#737373"/><rect x="24.8" y="7.8" width="0.9" height="20.2" fill="#737373"/></svg></div>
<div class="bt" style="left:1725px;top:1039px;width:56px;height:48px"><svg class="ic" style="left:12px;top:8px;color:#ffffff" width="32" height="32" viewBox="0 0 32 32" fill="currentColor" stroke="none"><path d="M4.4 19.9 H11.8 V21.4 Q11.8 22.4 12.8 22.4 H19.2 Q20.2 22.4 20.2 21.4 V19.9 H27.6 Q29 19.9 29 21.3 V26.5 Q29 27.9 27.6 27.9 H4.4 Q3 27.9 3 26.5 V21.3 Q3 19.9 4.4 19.9Z"/><path d="M15.6 3.2 Q16 2.8 16.4 3.2 L24.2 11.3 Q24.7 12 24 12 H19.1 V20.4 Q19.1 21.2 18.3 21.2 H13.7 Q12.9 21.2 12.9 20.4 V12 H8 Q7.3 12 7.8 11.3Z" stroke="#737373" stroke-width="2" style="paint-order:stroke"/><rect x="21" y="24.1" width="2" height="1.7" fill="#737373"/><rect x="25" y="24.1" width="2" height="1.7" fill="#737373"/></svg><div class="st" style="left:12px;top:8px;width:32px;height:32px"></div></div>
<div class="bt" style="left:1785px;top:1039px;width:56px;height:48px"><svg class="ic" style="left:12px;top:8px;color:#ffffff" width="32" height="32" viewBox="0 0 32 32" fill="currentColor" stroke="none"><path d="M4.4 18.1 H10.4 L16 23.7 L21.6 18.1 H27.6 Q29 18.1 29 19.5 V24.6 Q29 26 27.6 26 H4.4 Q3 26 3 24.6 V19.5 Q3 18.1 4.4 18.1Z"/><path d="M12.9 2 H19.1 V10.8 H23.9 Q24.6 10.8 24.1 11.4 L16.4 19.1 Q16 19.5 15.6 19.1 L7.9 11.4 Q7.4 10.8 8.1 10.8 H12.9Z" stroke="#737373" stroke-width="2" style="paint-order:stroke"/><path d="M7 10.2 L16 19.8 L25 10.2" fill="none" stroke="#737373" stroke-width="0"/><rect x="21" y="22.1" width="2" height="1.7" fill="#737373"/><rect x="25" y="22.1" width="2" height="1.7" fill="#737373"/></svg><div class="st" style="left:12px;top:8px;width:32px;height:32px"></div></div>
<div class="bt" style="left:1845px;top:1039px;width:56px;height:48px"><svg class="ic" style="left:12px;top:8px;color:#ffffff" width="32" height="32" viewBox="0 0 32 32" fill="currentColor" stroke="none"><rect x="0" y="5.9" width="32" height="20.2" rx="10.1"/><circle cx="22" cy="16" r="8" fill="#737373"/></svg></div>
<svg style="position:absolute;left:1902px;top:1070px" width="20" height="20" viewBox="0 0 20 20" fill="#737373"><circle cx="14" cy="3.5" r="2"/><circle cx="8.5" cy="9" r="2"/><circle cx="14" cy="9" r="2"/><circle cx="3" cy="14.5" r="2"/><circle cx="8.5" cy="14.5" r="2"/><circle cx="14" cy="14.5" r="2"/></svg>
<div style="position:absolute;left:822px;top:196px;width:195px;height:215px;background:#333;border:3px solid #f4f4f4"></div>
<div style="position:absolute;left:825px;top:209px;width:195px;height:1px;background:repeating-linear-gradient(90deg,#c8c8c8 0 8px,transparent 8px 12px)"></div>
<div style="position:absolute;left:825px;top:254px;width:195px;height:1px;background:#9a9a9a"></div>
<div style="position:absolute;left:825px;top:351px;width:195px;height:1px;background:#9a9a9a"></div>
<div style="position:absolute;left:825px;top:261px;width:195px;height:28px;background:#0080ff"></div>
<div class="m" style="left:854px;top:222px">do nothing</div>
<div class="m" style="left:854px;top:263px">change format</div>
<div class="m" style="left:854px;top:291px">change unit</div>
<div class="m" style="left:854px;top:319px">apply rate</div>
<div class="m" style="left:854px;top:360px">move row</div>
<div class="m" style="left:854px;top:388px">move column</div>
</body></html>
